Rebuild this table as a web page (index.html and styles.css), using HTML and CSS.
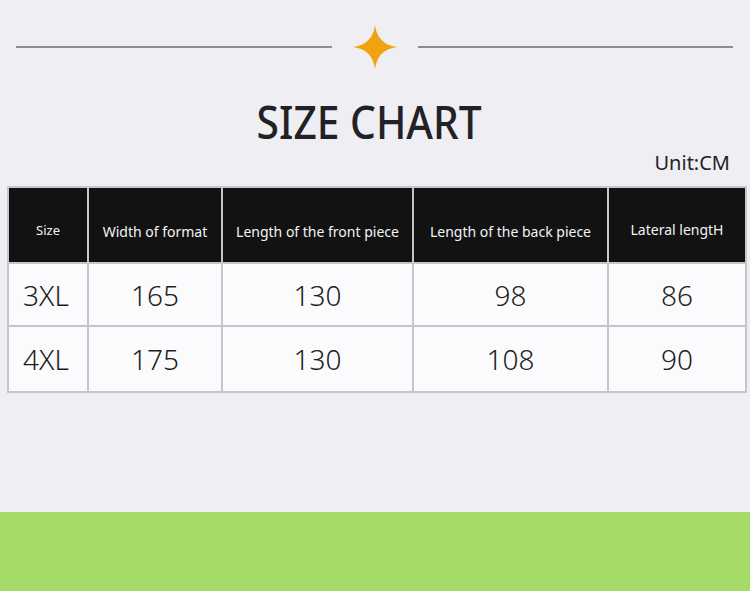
FILE: index.html
```html
<!DOCTYPE html>
<html>
<head>
<meta charset="utf-8">
<link rel="stylesheet" href="styles.css">
</head>
<body>
<div class="page">
  <div class="divider">
    <span class="line"></span>
    <svg class="star" width="44" height="44" viewBox="0 0 44 44"><path d="M22 0 Q24.5 19.5 44 22 Q24.5 24.5 22 44 Q19.5 24.5 0 22 Q19.5 19.5 22 0 Z" fill="#f0a20f"/></svg>
    <span class="line"></span>
  </div>
  <div class="title-wrap"><h1 class="title">SIZE CHART</h1></div>
  <div class="unit">Unit:CM</div>
  <table class="chart">
    <colgroup>
      <col class="c1"><col class="c2"><col class="c3"><col class="c4"><col class="c5">
    </colgroup>
    <thead>
      <tr>
        <th class="small">Size</th>
        <th>Width of format</th>
        <th>Length of the front piece</th>
        <th>Length of the back piece</th>
        <th class="up">Lateral lengtH</th>
      </tr>
    </thead>
    <tbody>
      <tr class="r1"><td>3XL</td><td>165</td><td>130</td><td>98</td><td>86</td></tr>
      <tr class="r2"><td>4XL</td><td>175</td><td>130</td><td>108</td><td>90</td></tr>
    </tbody>
  </table>
  <div class="spacer"></div>
  <div class="footer"></div>
</div>
</body>
</html>
```
FILE: styles.css
```css
html, body {
  margin: 0;
  padding: 0;
}
body {
  background: #efeef2;
  font-family: "Noto Sans", "Noto Sans CJK SC", sans-serif;
  width: 750px;
  height: 591px;
  overflow: hidden;
}
.page {
  display: flex;
  flex-direction: column;
  height: 591px;
}
.divider {
  display: flex;
  align-items: center;
  padding: 25px 17px 0 16px;
  gap: 21px;
  height: 44px;
}
.line {
  flex: 1;
  height: 2px;
  background: #8f8d93;
}
.star {
  display: block;
  flex: none;
}
.title-wrap {
  display: flex;
  justify-content: center;
  margin-top: 26px;
  padding-right: 11px;
}
.title {
  margin: 0;
  font-size: 46px;
  font-weight: 500;
  color: #222226;
  line-height: 52px;
  transform: scaleX(0.885);
}
.unit {
  text-align: right;
  padding-right: 20px;
  font-size: 20px;
  color: #222226;
  line-height: 28px;
  margin-top: 2px;
}
.chart {
  margin: 9px 0 0 7px;
  border-collapse: collapse;
  table-layout: fixed;
  width: 738px;
}
.c1 { width: 80px; }
.c2 { width: 134px; }
.c3 { width: 191px; }
.c4 { width: 195px; }
.c5 { width: 138px; }
.chart th, .chart td {
  border: 2px solid #c6c5ca;
  text-align: center;
  padding: 0;
}
.chart th {
  background: #121212;
  color: #f4f4f4;
  font-weight: 400;
  font-size: 14px;
  height: 62px;
  padding-top: 12px;
  white-space: nowrap;
}
.chart th.small { font-size: 13px; padding-top: 10px; height: 64px; }
.chart th.up { padding-top: 8px; height: 66px; }
.chart td {
  background: #fbfbfd;
  color: #1e1e22;
  font-size: 28px;
  font-weight: 300;
}
.chart td:first-child { padding-right: 4px; }
.r1 td { height: 61px; }
.r2 td { height: 64px; }
.spacer { flex: 1; }
.footer {
  height: 79px;
  background: #a5da69;
}
```
